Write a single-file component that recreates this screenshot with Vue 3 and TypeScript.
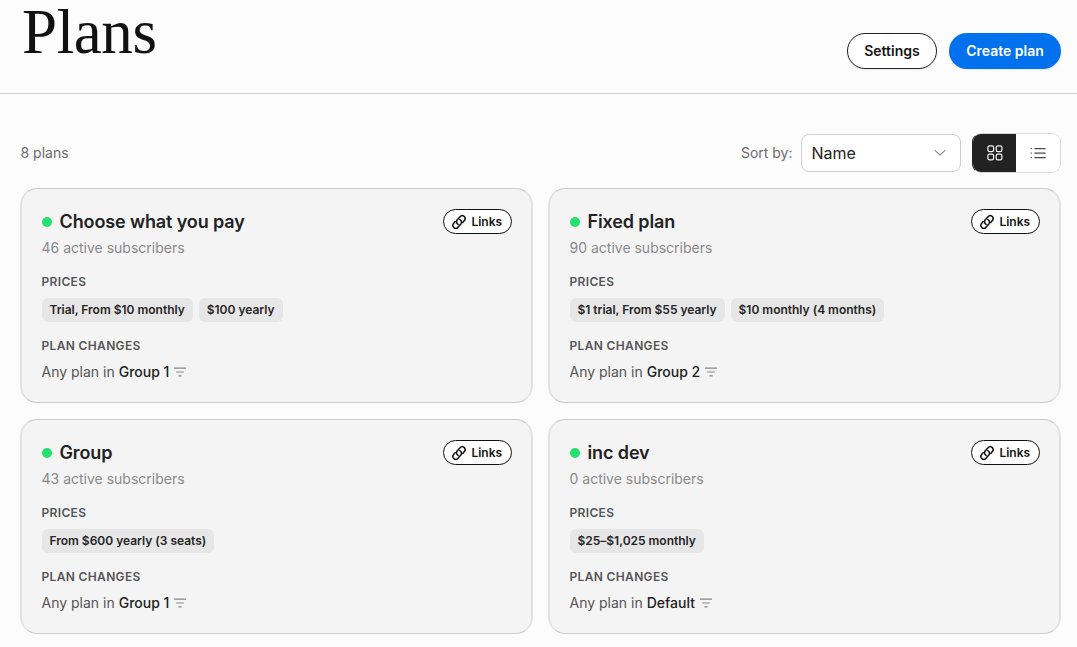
<script setup lang="ts">
interface Plan {
  name: string
  subscribers: number
  prices: string[]
  group: string
}

const plans: Plan[] = [
  { name: 'Choose what you pay', subscribers: 46, prices: ['Trial, From $10 monthly', '$100 yearly'], group: 'Group 1' },
  { name: 'Fixed plan', subscribers: 90, prices: ['$1 trial, From $55 yearly', '$10 monthly (4 months)'], group: 'Group 2' },
  { name: 'Group', subscribers: 43, prices: ['From $600 yearly (3 seats)'], group: 'Group 1' },
  { name: 'inc dev', subscribers: 0, prices: ['$25–$1,025 monthly'], group: 'Default' },
]
</script>

<template>
  <div class="page">
    <header class="header">
      <h1>Plans</h1>
      <div class="actions">
        <button class="btn outline">Settings</button>
        <button class="btn primary">Create plan</button>
      </div>
    </header>

    <div class="toolbar">
      <span class="count">8 plans</span>
      <span class="sort-label">Sort by:</span>
      <div class="select">
        <span>Name</span>
        <svg width="12" height="8" viewBox="0 0 12 8" fill="none" stroke="#8a8a8a" stroke-width="1.1" stroke-linecap="round" stroke-linejoin="round"><path d="M1 1.3 6 6.2 11 1.3" /></svg>
      </div>
      <div class="toggle">
        <button class="on" aria-label="Grid view">
          <svg width="16" height="16" viewBox="0 0 16 16" fill="none" stroke="#f2f2f2" stroke-width="1.25">
            <rect x="0.9" y="0.9" width="5.7" height="5.7" rx="1.6" />
            <rect x="9.2" y="0.9" width="5.7" height="5.7" rx="1.6" />
            <rect x="0.9" y="9.2" width="5.7" height="5.7" rx="1.6" />
            <rect x="9.2" y="9.2" width="5.7" height="5.7" rx="1.6" />
          </svg>
        </button>
        <button class="off" aria-label="List view">
          <svg width="16" height="12" viewBox="0 0 16 12" fill="none" stroke="#4a4a4a" stroke-width="1.25" stroke-linecap="round">
            <path d="M4.9 1.5h10.3M4.9 6h10.3M4.9 10.5h10.3M1.1 1.5h.3M1.1 6h.3M1.1 10.5h.3" />
          </svg>
        </button>
      </div>
    </div>

    <main class="grid">
      <article v-for="plan in plans" :key="plan.name" class="card">
        <div class="card-head">
          <i class="dot"></i>
          <h2>{{ plan.name }}</h2>
          <button class="links">
            <svg width="16" height="16" viewBox="0 0 24 24" fill="none" stroke="#111" stroke-width="2.3" stroke-linecap="round" stroke-linejoin="round">
              <path d="M10.6 15.6a4.4 4.4 0 0 1-1.4-6.5l4.3-5a4.3 4.3 0 0 1 6.6 5.6l-2.5 3" />
              <path d="M13.4 8.4a4.4 4.4 0 0 1 1.4 6.5l-4.3 5a4.3 4.3 0 0 1-6.6-5.6l2.5-3" />
            </svg>
            <span>Links</span>
          </button>
        </div>
        <p class="subs">{{ plan.subscribers }} active subscribers</p>
        <h3>PRICES</h3>
        <div class="tags">
          <span v-for="price in plan.prices" :key="price" class="tag">{{ price }}</span>
        </div>
        <h3 class="changes">PLAN CHANGES</h3>
        <p class="rule">
          <span>Any plan in <b>{{ plan.group }}</b></span>
          <svg width="12" height="10" viewBox="0 0 12 10" fill="none" stroke="#858585" stroke-width="1.2"><path d="M0 1.2h12M2.2 5h7.6M4.4 8.8h3.2" /></svg>
        </p>
      </article>
    </main>
  </div>
</template>

<style>
html, body { background: #fcfcfc; }
</style>

<style scoped>
.page {
  width: 1077px;
  height: 647px;
  font-family: Inter, "Liberation Sans", sans-serif;
  color: #222;
}
h1, h2, h3, p { margin: 0; }
button { font-family: inherit; margin: 0; padding: 0; box-sizing: border-box; }
.header {
  box-sizing: border-box;
  height: 94px;
  border-bottom: 1px solid #cfcfcf;
  display: flex;
  justify-content: space-between;
  padding: 0 16px 0 22px;
}
h1 {
  font: 400 63px/64px "Liberation Serif", serif;
  letter-spacing: -0.4px;
  color: #111;
}
.actions { display: flex; gap: 12px; padding-top: 33px; }
.btn { height: 36px; padding-bottom: 1px; border-radius: 18px; font-size: 14px; font-weight: 600; }
.outline { width: 90px; border: 1px solid #222; background: #fff; color: #151515; box-shadow: 0 1px 2px rgba(0, 0, 0, 0.08); }
.primary { width: 112px; border: 0; background: #0271ed; color: #fff; box-shadow: 0 1px 2px rgba(0, 0, 0, 0.08); }
.toolbar {
  display: flex;
  align-items: center;
  height: 40px;
  padding: 0 16px 0 20.5px;
  margin-top: 39px;
  font-size: 14px;
  color: #6b6b6b;
}
.count { flex: 1; }
.count, .sort-label { padding-bottom: 1px; }
.select {
  box-sizing: border-box;
  width: 160px;
  height: 38px;
  margin: 0 11.5px 0 8px;
  padding: 0 14px 0 10px;
  border: 1px solid #cfcfcf;
  border-radius: 8px;
  background: #fff;
  display: flex;
  align-items: center;
  justify-content: space-between;
  color: #222;
  font-size: 16px;
}
.toggle {
  box-sizing: border-box;
  width: 89px;
  height: 40px;
  border: 1px solid #d9d9d9;
  border-left-color: #222;
  border-radius: 9px;
  overflow: hidden;
  display: flex;
  background: #fff;
}
.toggle button { height: 38px; border: 0; display: flex; align-items: center; justify-content: center; }
.on { width: 43px; background: #222; }
.off { width: 44px; background: #fff; }
.grid {
  display: grid;
  grid-template-columns: 513px 513px;
  gap: 16px 15px;
  padding: 15px 0 0 20px;
}
.card {
  box-sizing: border-box;
  height: 215px;
  border: solid;
  border-width: 1px 2px;
  border-color: #cdcdcd #e2e2e2;
  border-radius: 17px;
  background: #f4f4f4;
  padding: 20px 19.5px 0;
}
.card-head { display: flex; align-items: flex-start; height: 26px; }
.dot { width: 10px; height: 10px; border-radius: 50%; background: #23e06f; margin: 8px 8px 0 0; }
h2 { flex: 1; font-size: 18px; line-height: 25px; font-weight: 600; letter-spacing: -0.12px; }
.links {
  width: 69px;
  height: 25px;
  border: 1px solid #111;
  border-radius: 13px;
  background: #fff;
  display: flex;
  align-items: center;
  justify-content: center;
  gap: 4.5px;
  padding-right: 1px;
  font-size: 12px;
  font-weight: 600;
  color: #151515;
}
.subs { font-size: 14px; line-height: 20px; margin-top: 3px; color: #8a8a8a; }
h3 { font-size: 12px; line-height: 16px; font-weight: 600; letter-spacing: 0.34px; color: #555; margin-top: 16px; }
.tags { display: flex; gap: 6px; margin-top: 8px; }
.tag { height: 24px; line-height: 24px; padding: 0 8px; border-radius: 6px; background: #e6e6e6; font-size: 12px; font-weight: 600; letter-spacing: -0.01px; white-space: nowrap; color: #252525; }
.rule { display: flex; align-items: center; gap: 5px; margin-top: 8px; font-size: 14px; line-height: 20px; color: #555; }
.rule b { font-weight: 500; color: #222; }
</style>
